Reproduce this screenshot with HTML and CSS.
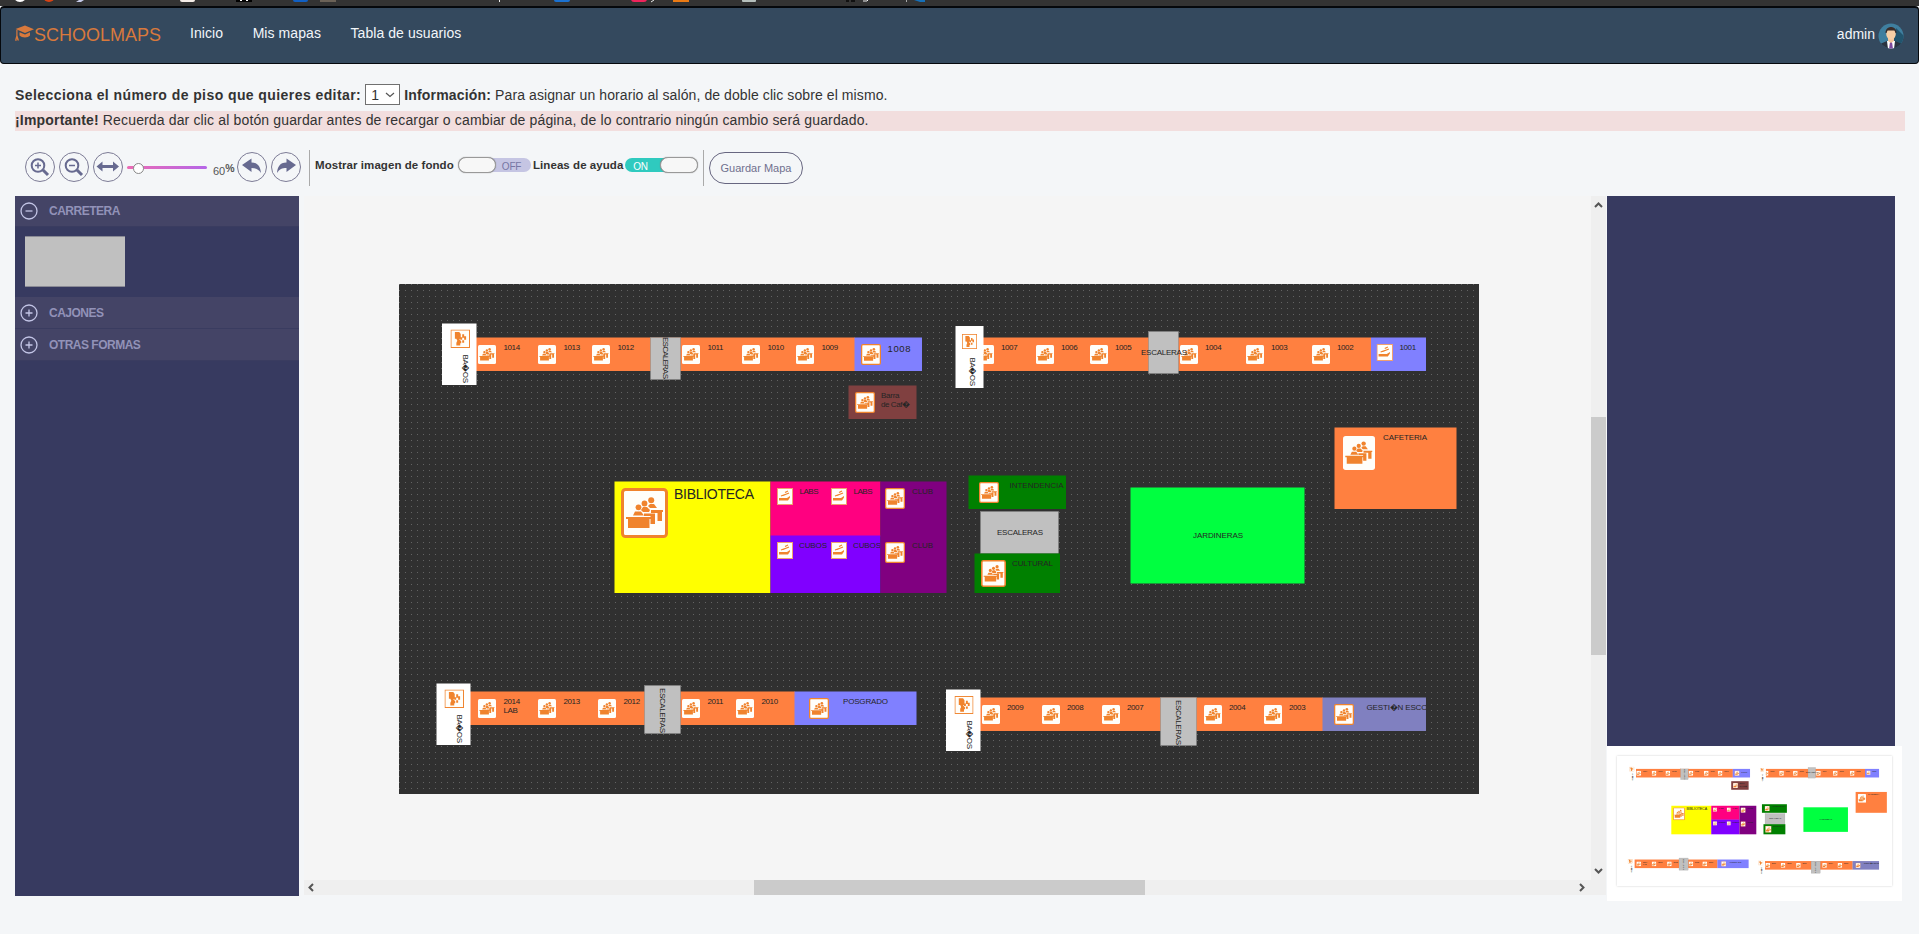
FILE: index.html
```html
<!DOCTYPE html>
<html lang="es">
<head>
<meta charset="utf-8">
<title>SchoolMaps</title>
<link rel="stylesheet" href="styles.css">
</head>
<body>
<svg class="defs" aria-hidden="true">
  <defs>
    <pattern id="dots" x="399" y="284" width="6" height="6" patternUnits="userSpaceOnUse"><rect width="1" height="1" fill="#636363"/></pattern>
    <g id="people" fill="#f0832d">
      <circle cx="17.5" cy="19.3" r="2.9"/><circle cx="23.5" cy="15.5" r="2.9"/><circle cx="30.2" cy="12.3" r="3"/>
      <path d="M12 27.500l2-4h6l3 4zM20 22l2-3h4l3 3-1 2h-6zM27 18l2-2h4l3 4h-7z"/>
      <path d="M5 29h25v2h-1.500v9h-21.500v-9h-2zM23 25.500h11v10.500h-4.500v-8h-6.500zM30 22h12v2h-1v9h-4.500v-8h-6.500z"/>
    </g>
    <symbol id="room" viewBox="0 0 47 50" preserveAspectRatio="none"><rect width="47" height="50" rx="4" fill="#fffefa"/><use href="#people" transform="translate(-2 -2) scale(1.070)"/></symbol>
    <symbol id="roomb" viewBox="0 0 47 50" preserveAspectRatio="none"><rect x="1.500" y="1.500" width="44" height="47" rx="3" fill="#fffefa" stroke="#f0832d" stroke-width="3"/><use href="#people"/></symbol>
    <symbol id="hand" viewBox="0 0 16 17" preserveAspectRatio="none"><rect x=".5" y=".5" width="15" height="16" fill="#fffefa" stroke="#f0a070"/><path d="M2 10h8l3-2v1.500l-2 3h-9z" fill="#f0832d"/><path d="M4 8l4-1.500M6 7.500l6-2.500M8 4.500l3-1.500" fill="none" stroke="#f0832d" stroke-width="1.200"/></symbol>
    <symbol id="wc" viewBox="0 0 20 19" preserveAspectRatio="none"><rect x=".5" y=".5" width="19" height="18" fill="#fffefa" stroke="#f0832d"/><path d="M4.500 2.500h4.500l1.500 2v4.500l-1.500 1 2 2v2h-1v2.500h-4v-3l1-2-1-2h-1.500zM12 5h2v3.500h-2zM10 8h2v2.500h-2zM14 7h2v3.500h-2zM12 11h2v2.500h-2z" fill="#f0832d"/></symbol>
    <clipPath id="gclip"><rect x="1322" y="697" width="104" height="34"/></clipPath>
    <clipPath id="cclip"><rect x="770" y="536" width="110" height="57"/></clipPath>
    <g id="plan">
      <!-- upper left block -->
      <rect class="orange" x="476" y="337.500" width="379" height="33.500"/>
      <rect class="blue" x="854.500" y="337.500" width="67.500" height="33.500"/>
      <use href="#room" x="478" y="345" width="18" height="19"/><use href="#room" x="538" y="345" width="18" height="19"/><use href="#room" x="592" y="345" width="18" height="19"/><use href="#room" x="682" y="345" width="18" height="19"/><use href="#room" x="742" y="345" width="18" height="19"/><use href="#room" x="796" y="345" width="18" height="19"/><use href="#roomb" x="861" y="344" width="20" height="21"/>
      <text x="503.500" y="350">1014</text><text x="563.500" y="350">1013</text><text x="617.500" y="350">1012</text><text x="707.500" y="350">1011</text><text x="767.500" y="350">1010</text><text x="821.500" y="350">1009</text><text class="mid" x="887.500" y="352" textLength="23">1008</text>
      <rect class="stairs" x="650.500" y="337.500" width="30" height="42"/><text transform="translate(662.500 337) rotate(90)" textLength="42">ESCALERAS</text>
      <rect class="white" x="442" y="323.500" width="34.500" height="61.500"/><use href="#wc" x="450.500" y="329.500" width="19.500" height="18.500"/><text transform="translate(462.500 354.500) rotate(90)" textLength="28.500">BA�OS</text>
      <rect fill="#804040" x="848.500" y="385.500" width="68" height="33.500"/><use href="#roomb" x="855" y="392" width="20" height="21"/><text x="881" y="398" textLength="18.500">Barra</text><text x="881" y="407" textLength="29">de Caf�</text>
      <!-- upper right block -->
      <rect class="orange" x="983" y="337.500" width="388" height="33.500"/>
      <rect class="blue" x="1371" y="337.500" width="55" height="33.500"/>
      <use href="#room" x="976" y="345" width="18" height="19"/><use href="#room" x="1036" y="345" width="18" height="19"/><use href="#room" x="1090" y="345" width="18" height="19"/><use href="#room" x="1180" y="345" width="18" height="19"/><use href="#room" x="1246" y="345" width="18" height="19"/><use href="#room" x="1312" y="345" width="18" height="19"/><use href="#hand" x="1376.500" y="344" width="16.500" height="17"/>
      <text x="1001" y="350">1007</text><text x="1061" y="350">1006</text><text x="1115" y="350">1005</text><text x="1205" y="350">1004</text><text x="1271" y="350">1003</text><text x="1337" y="350">1002</text><text x="1399.500" y="350">1001</text>
      <rect class="stairs" x="1148.500" y="331.500" width="30" height="42"/><text x="1141" y="355" textLength="46">ESCALERAS</text>
      <rect class="white" x="955.500" y="326" width="28" height="62"/><use href="#wc" x="962" y="334" width="15" height="15"/><text transform="translate(969.500 357.500) rotate(90)" textLength="28.500">BA�OS</text>
      <!-- middle -->
      <rect class="orange" x="1334.500" y="427.500" width="122" height="81.500"/><use href="#room" x="1343" y="436" width="32" height="34"/><text x="1383" y="439.500" textLength="44">CAFETERIA</text>
      <rect fill="#ff0" x="614.500" y="481.500" width="156" height="111.500"/><use href="#roomb" x="621" y="488" width="47" height="50"/><text class="big" x="674" y="499" textLength="80">BIBLIOTECA</text>
      <rect fill="#ff0080" x="770.500" y="481.500" width="110" height="55"/><rect fill="#8000ff" x="770.500" y="535.500" width="110" height="57.500"/><rect fill="#800080" x="880.500" y="481.500" width="66" height="111.500"/>
      <use href="#hand" x="777" y="488" width="16" height="17"/><use href="#hand" x="831" y="488" width="16" height="17"/><use href="#hand" x="777" y="542" width="16" height="17"/><use href="#hand" x="831" y="542" width="16" height="17"/><use href="#roomb" x="885" y="488" width="20" height="21"/><use href="#roomb" x="885" y="542" width="20" height="21"/>
      <text x="799.500" y="494" textLength="19">LABS</text><text x="853.500" y="494" textLength="19">LABS</text>
      <g clip-path="url(#cclip)"><text x="799" y="548" textLength="28">CUBOS</text><text x="853" y="548" textLength="28">CUBOS</text></g>
      <text x="912" y="494" textLength="21">CLUB</text><text x="912" y="548" textLength="21">CLUB</text>
      <rect class="green" x="968.500" y="475.500" width="97.500" height="33.500"/><use href="#roomb" x="979" y="482" width="20" height="21"/><text x="1009.500" y="488" textLength="54">INTENDENCIA</text>
      <rect class="stairs" x="980.500" y="511.500" width="78" height="42"/><text x="997" y="535" textLength="46">ESCALERAS</text>
      <rect class="green" x="974.500" y="553.500" width="85.500" height="39.500"/><use href="#roomb" x="981" y="560" width="25" height="27"/><text x="1012" y="566" textLength="41">CULTURAL</text>
      <rect fill="#00ff40" x="1130.500" y="487.500" width="174" height="96"/><text x="1193" y="538" textLength="50">JARDINERAS</text>
      <!-- lower left block -->
      <rect class="orange" x="470" y="691.500" width="325" height="33.500"/><rect class="blue" x="794.500" y="691.500" width="122" height="33.500"/>
      <use href="#room" x="478" y="699" width="18" height="19"/><use href="#room" x="538" y="699" width="18" height="19"/><use href="#room" x="598" y="699" width="18" height="19"/><use href="#room" x="682" y="699" width="18" height="19"/><use href="#room" x="736" y="699" width="18" height="19"/><use href="#roomb" x="809" y="698" width="20" height="21"/>
      <text x="503.500" y="704">2014</text><text x="503.500" y="713">LAB</text><text x="563.500" y="704">2013</text><text x="623.500" y="704">2012</text><text x="707.500" y="704">2011</text><text x="761.500" y="704">2010</text><text x="843" y="704" textLength="45">POSGRADO</text>
      <rect class="stairs" x="644.500" y="685.500" width="36" height="48"/><text transform="translate(659.500 688) rotate(90)" textLength="45">ESCALERAS</text>
      <rect class="white" x="436.500" y="683.500" width="34" height="61.500"/><use href="#wc" x="444.500" y="689.500" width="19.500" height="18.500"/><text transform="translate(456.500 714.500) rotate(90)" textLength="28.500">BA�OS</text>
      <!-- lower right block -->
      <rect class="orange" x="980" y="697.500" width="343" height="33.500"/><rect fill="#8080c0" x="1322.500" y="697.500" width="103.500" height="33.500"/>
      <use href="#room" x="982" y="705" width="18" height="19"/><use href="#room" x="1042" y="705" width="18" height="19"/><use href="#room" x="1102" y="705" width="18" height="19"/><use href="#room" x="1204" y="705" width="18" height="19"/><use href="#room" x="1264" y="705" width="18" height="19"/><use href="#roomb" x="1334" y="704" width="20" height="21"/>
      <text x="1007" y="710">2009</text><text x="1067" y="710">2008</text><text x="1127" y="710">2007</text><text x="1229" y="710">2004</text><text x="1289" y="710">2003</text>
      <g clip-path="url(#gclip)"><text x="1366.500" y="710" textLength="76">GESTI�N ESCOLAR</text></g>
      <rect class="stairs" x="1160.500" y="697.500" width="36" height="48"/><text transform="translate(1175.500 700) rotate(90)" textLength="45">ESCALERAS</text>
      <rect class="white" x="946" y="689.500" width="34.500" height="61.500"/><use href="#wc" x="954.500" y="696" width="19" height="18"/><text transform="translate(966.500 720.500) rotate(90)" textLength="28.500">BA�OS</text>
    </g>
  </defs>
</svg>

<svg class="tabs" width="1919" height="6" aria-hidden="true">
  <circle cx="20" cy="-5" r="7" fill="#fff"/><circle cx="49" cy="-4" r="6" fill="#d84315"/><path d="M76 2l3-2h5l-3 2z" fill="#c5cae9"/><rect x="180" y="-4" width="15" height="6" rx="2" fill="#f5ede8"/><rect x="236" y="0" width="16" height="2" fill="#000"/><path d="M240 0h2v1h-2zM246 0h2v1h-2z" fill="#fff"/><rect x="293" y="-4" width="15" height="6" rx="2" fill="#1160c4"/><rect x="320" y="0" width="16" height="2" fill="#6b6257"/><rect x="499" y="0" width="1" height="2" fill="#eee"/><rect x="554" y="-4" width="16" height="6" rx="2" fill="#1b72d2"/><rect x="631" y="-4" width="16" height="6" rx="3" fill="#f0245c"/><path d="M651 2l3-2" stroke="#eee"/><rect x="673" y="0" width="16" height="2" fill="#ea7a14"/><rect x="742" y="-4" width="14" height="6" rx="1" fill="#b5bfbc"/><path d="M846 0h3v2h-3zM851 0h4v2h-4z" fill="#111"/><path d="M863 1h4l2-2" stroke="#eee" fill="none"/><rect x="906" y="0" width="1" height="2" fill="#aaa"/><path d="M914 0h11v2h-5z" fill="#1670b8"/>
</svg>

<nav class="navbar">
  <a class="brand"><svg width="19" height="17" viewBox="0 0 19 17" fill="#d9793c"><path d="M.5 4L10 .5 19 4.300 10 8zM4.500 7.200L10 9.500l5-2.300v3.300c-2 2.600-8 2.600-10.500 0z"/><path d="M2.500 5v5.500l1.500 5h-1.500l-.7-2-.3 2.500-1.500-.5 1.300-5V5z"/></svg>SCHOOLMAPS</a>
  <a>Inicio</a><a>Mis mapas</a><a>Tabla de usuarios</a>
  <a class="user">admin
    <svg width="26" height="26" viewBox="0 0 26 26"><clipPath id="av"><circle cx="13" cy="13" r="12.500"/></clipPath><g clip-path="url(#av)"><path fill="#3f7f9f" d="M0 0h26v26H0z"/><path fill="#22556e" d="M18 5l8 8v13H14z"/><path fill="#2b3440" d="M2 26v-5l7-3h8l7 3v5z"/><path fill="#fff" d="M9 18h8l-1 8h-6z"/><path fill="#7e4a9e" d="M12 19h2l1 7h-4z"/><path fill="#f4c79c" d="M10 13h6v5l-3 2-3-2z"/><ellipse cx="13" cy="11" rx="4.800" ry="5.500" fill="#f7cfa5"/><path fill="#3a2d2a" d="M7.500 10c0-8 11-8 11 0h-1l-1-2.500h-7l-1 2.500z"/></g></svg>
  </a>
</nav>

<main class="page">
  <div class="floor"><b>Selecciona el número de piso que quieres editar:</b><span class="select">1<svg width="10" height="6" viewBox="0 0 10 6"><path d="M1 1l4 3.500L9 1" fill="none" stroke="#555" stroke-width="1.200"/></svg></span><span><b class="tight">Información:</b> Para asignar un horario al salón, de doble clic sobre el mismo.</span></div>
  <p class="alert"><b class="tight">¡Importante!</b> Recuerda dar clic al botón guardar antes de recargar o cambiar de página, de lo contrario ningún cambio será guardado.</p>

  <div class="toolbar">
    <span class="round"><svg viewBox="0 0 30 30"><g fill="none" stroke="#676a90" stroke-width="2"><circle cx="13" cy="13.500" r="6.300"/><path d="M18 18l5 5" stroke-width="3"/><path d="M10 13.500h6M13 10.500v6" stroke-width="1.500"/></g></svg></span>
    <span class="round"><svg viewBox="0 0 30 30"><g fill="none" stroke="#676a90" stroke-width="2"><circle cx="13" cy="13.500" r="6.300"/><path d="M18 18l5 5" stroke-width="3"/><path d="M10 13.500h6" stroke-width="1.500"/></g></svg></span>
    <span class="round"><svg viewBox="0 0 30 30"><path d="M3.500 14.500l6-5v3.500h10.500v-3.500l6 5-6 5v-3.500h-10.500v3.500z" fill="#676a90"/></svg></span>
    <span class="slider"><i></i></span>
    <span class="zoom">60<b>%</b></span>
    <span class="round"><svg viewBox="0 0 30 30"><path d="M5 13l9.500-6.500v4c7 0 9 5 9.500 10.500-2.500-4-5-5-9.500-5v4z" fill="#676a90"/></svg></span>
    <span class="round"><svg viewBox="0 0 30 30"><path d="M25 13l-9.500-6.500v4c-7 0-9 5-9.500 10.500 2.500-4 5-5 9.500-5v4z" fill="#676a90"/></svg></span>
    <span class="sep"></span>
    <b class="label bg-label">Mostrar imagen de fondo</b><span class="toggle off"><i></i><span>OFF</span></span>
    <b class="label help-label">Lineas de ayuda</b><span class="toggle on"><span>ON</span><i></i></span>
    <span class="sep last"></span>
    <button class="save">Guardar Mapa</button>
  </div>

  <div class="workspace">
    <aside class="palette">
      <div class="head"><svg width="18" height="18" viewBox="0 0 18 18"><circle cx="9" cy="9" r="8"/><path d="M5.500 9h7"/></svg>CARRETERA</div>
      <div class="body"><div class="road"></div></div>
      <div class="head"><svg width="18" height="18" viewBox="0 0 18 18"><circle cx="9" cy="9" r="8"/><path d="M5.500 9h7M9 5.500v7"/></svg>CAJONES</div>
      <div class="head"><svg width="18" height="18" viewBox="0 0 18 18"><circle cx="9" cy="9" r="8"/><path d="M5.500 9h7M9 5.500v7"/></svg>OTRAS FORMAS</div>
    </aside>
    <div class="diagram">
      <svg class="map" width="1287" height="684" viewBox="304 196 1287 684">
        <rect x="399" y="284" width="1080" height="510" fill="#303030"/><rect x="399" y="284" width="1080" height="510" fill="url(#dots)"/>
        <use href="#plan"/>
      </svg>
      <div class="vbar"><svg width="9" height="6" viewBox="0 0 9 6"><path d="M1 5l3.500-3.500L8 5"/></svg><div class="vthumb"></div><svg width="9" height="6" viewBox="0 0 9 6"><path d="M1 1l3.500 3.500L8 1"/></svg></div>
      <div class="hbar"><svg width="6" height="9" viewBox="0 0 6 9"><path d="M5 1L1.500 4.500 5 8"/></svg><div class="hthumb"></div><svg width="6" height="9" viewBox="0 0 6 9"><path d="M1 1l3.500 3.500L1 8"/></svg></div>
    </div>
    <aside class="side">
      <div class="info"></div>
      <div class="overview"><svg width="275" height="130" viewBox="1617 756 275 130"><use href="#plan" transform="translate(1514 682.500) scale(.256)"/></svg></div>
    </aside>
  </div>
</main>
</body>
</html>
```
FILE: styles.css
```css
* { box-sizing: border-box; }
body { margin: 0; height: 934px; overflow: hidden; background: #f4f6f8; color: #333; font: 14px/20px "Liberation Sans", Arial, sans-serif; }
.defs { position: absolute; width: 0; height: 0; }
.tabs { display: block; background: #333; }

.navbar { height: 58px; display: flex; align-items: flex-start; padding: 15px 13px 0 14px; background: #34495e; border: 1px solid #05080c; border-top-width: 2px; border-radius: 4px; color: #f2f6fa; }
.navbar a { margin-right: 29.5px; white-space: nowrap; letter-spacing: .07px; }
.navbar .brand { display: flex; align-items: center; margin-right: 29px; font-size: 18px; line-height: 24px; color: #d9793c; letter-spacing: 0; }
.navbar .brand svg { margin-top: -3px; }
.navbar .user { display: flex; align-items: flex-start; gap: 3px; margin: -1px 1px 0 auto; line-height: 24px; letter-spacing: 0; }
.navbar .user svg { margin-top: 1px; }

.page { padding: 19px 14px 0 15px; }
.floor { display: flex; align-items: center; gap: 4px; height: 23px; white-space: nowrap; letter-spacing: .09px; }
.floor b { letter-spacing: .42px; }
.floor .tight, .alert .tight { letter-spacing: .18px; }
.select { display: flex; align-items: center; justify-content: space-between; width: 35px; height: 21px; padding: 0 4px 0 5px; border: 1px solid #707070; background: #fff; }
.alert { margin: 5px 0 0; height: 20px; line-height: 19px; background: #f2dede; white-space: nowrap; letter-spacing: .145px; }

.toolbar { display: flex; align-items: flex-start; height: 66px; padding: 20px 0 0 10px; }
.round { width: 30px; height: 30px; margin: 1px 4px 0 0; border: 1px solid #7d7c96; border-radius: 50%; }
.round svg { display: block; width: 30px; height: 30px; margin: -1px; }
.slider { width: 80px; height: 3px; margin: 15px 6px 0 0; border-radius: 2px; background: linear-gradient(90deg, #ec6bb4, #b566e8); }
.slider i { display: block; width: 11px; height: 11px; margin: -3px 0 0 6px; border: 1px solid #888; border-radius: 50%; background: #fff; }
.zoom { display: flex; width: 24px; margin-top: 10px; font-size: 11px; color: #555; }
.zoom b { margin-top: -3px; font-size: 10.5px; }
.sep { width: 1px; height: 36px; margin: -1px 5px 0 4px; background: #aaa; }
.label { font-size: 11.5px; line-height: 16px; margin-top: 6px; white-space: nowrap; }
.bg-label { width: 143px; letter-spacing: .06px; }
.help-label { width: 92px; margin-left: 2px; letter-spacing: .06px; }
.toggle { display: flex; align-items: center; width: 73px; height: 14px; margin-top: 7px; border-radius: 7px; font-size: 10px; }
.toggle i { width: 38px; height: 16px; flex: none; border: 1px solid #999; border-radius: 8px; background: #f7f7f7; box-shadow: 0 0 1px #777; }
.toggle span { flex: 1; text-align: center; padding-top: 3px; letter-spacing: -.2px; }
.toggle.off span { padding-right: 4px; }
.toggle.on span { padding-right: 4px; }
.off { background: linear-gradient(90deg, transparent 25px, #c5c5e3 25px); color: #7676a4; }
.on { background: linear-gradient(90deg, #2fcabf 50px, transparent 50px); color: #fff; }
.sep.last { margin: -1px 5px 0; }
.save { width: 94px; height: 32px; margin-top: 1px; padding: 0; border: 1px solid #676680; border-radius: 16px; background: transparent; color: #70708e; font: 11px "Liberation Sans", Arial, sans-serif; }

.workspace { display: flex; margin-top: -1px; }
.palette { width: 284px; height: 700px; margin-right: 5px; background: #373a60; }
.head { display: flex; align-items: center; gap: 11px; height: 32px; padding-left: 5px; border-bottom: 1px solid #3a3c60; background: #444466; color: #9292b8; font-size: 12px; font-weight: bold; letter-spacing: -.5px; }
.head:first-child { height: 31px; }
.head svg { fill: none; stroke: #c3c5e6; stroke-width: 1.3; }
.palette .body { height: 70px; padding: 9px 10px; }
.road { width: 100px; height: 51px; background: #c0c0c0; border: solid #8a8a95; border-width: 1px 0; }

.diagram { display: grid; grid-template: 684px 15px / 1287px 15px; height: 699px; background: #f5f5f5; }
.orange { fill: #ff8040; }
.blue { fill: #8080ff; }
.green { fill: #008000; }
.white { fill: #fff; }
.stairs { fill: #c0c0c0; stroke: #888; stroke-width: .5; }
#plan text { font-size: 8px; letter-spacing: -.4px; fill: #252525; }
#plan .mid { font-size: 9.500px; letter-spacing: 0; }
#plan .big { font-size: 14px; letter-spacing: 0; }
#plan text[textLength] { letter-spacing: 0; }
.vbar, .hbar { display: flex; justify-content: space-between; align-items: center; background: #efefef; }
.vbar { grid-area: 1 / 2 / 3 / 3; flex-direction: column; padding: 6px 0 21px; }
.vbar svg, .hbar svg { fill: none; stroke: #555; stroke-width: 2; }
.vthumb { width: 15px; height: 238px; margin-top: -4px; background: #cbcbcb; }
.hbar { padding: 0 6px 0 4px; }
.hthumb { width: 391px; height: 15px; margin-left: 5px; background: #cbcbcb; }

.side { width: 295px; margin-left: 1px; }
.info { width: 288px; height: 550px; background: #373a60; }
.overview { height: 155px; padding: 10px; background: #fff; }
.overview svg { display: block; box-shadow: 0 0 2px #ccc; }
```
